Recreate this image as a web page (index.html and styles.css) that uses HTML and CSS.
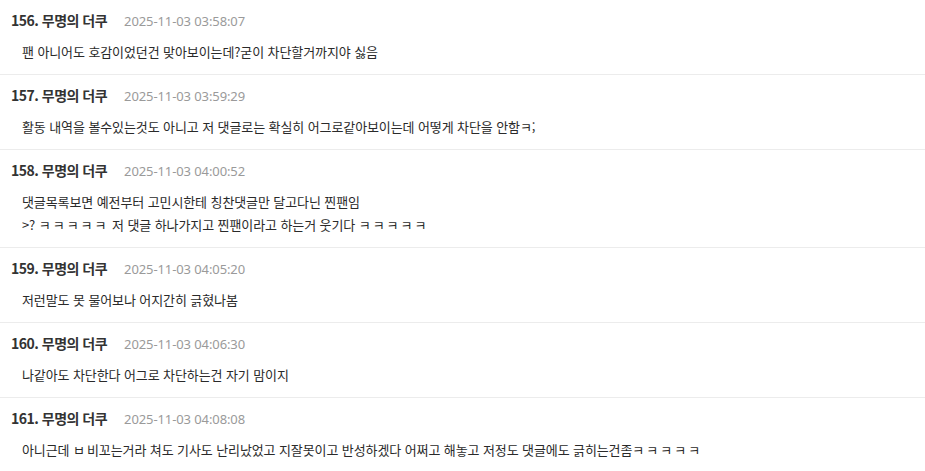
FILE: index.html
```html
<!DOCTYPE html>
<html lang="ko">
<head>
<meta charset="utf-8">
<link rel="stylesheet" href="styles.css">
</head>
<body>
<div class="comments">
  <div class="comment">
    <div class="head"><span class="name">156. 무명의 더쿠</span><span class="date">2025-11-03 03:58:07</span></div>
    <div class="text">팬 아니어도 호감이었던건 맞아보이는데?굳이 차단할거까지야 싫음</div>
  </div>
  <div class="comment">
    <div class="head"><span class="name">157. 무명의 더쿠</span><span class="date">2025-11-03 03:59:29</span></div>
    <div class="text">활동 내역을 볼수있는것도 아니고 저 댓글로는 확실히 어그로같아보이는데 어떻게 차단을 안함ㅋ;</div>
  </div>
  <div class="comment">
    <div class="head"><span class="name">158. 무명의 더쿠</span><span class="date">2025-11-03 04:00:52</span></div>
    <div class="text">댓글목록보면 예전부터 고민시한테 칭찬댓글만 달고다닌 찐팬임<br>&gt;? <span class="kk">ㅋㅋㅋㅋㅋ</span> 저 댓글 하나가지고 찐팬이라고 하는거 웃기다 <span class="kk">ㅋㅋㅋㅋㅋ</span></div>
  </div>
  <div class="comment">
    <div class="head"><span class="name">159. 무명의 더쿠</span><span class="date">2025-11-03 04:05:20</span></div>
    <div class="text">저런말도 못 물어보나 어지간히 긁혔나봄</div>
  </div>
  <div class="comment">
    <div class="head"><span class="name">160. 무명의 더쿠</span><span class="date">2025-11-03 04:06:30</span></div>
    <div class="text">나같아도 차단한다 어그로 차단하는건 자기 맘이지</div>
  </div>
  <div class="comment">
    <div class="head"><span class="name">161. 무명의 더쿠</span><span class="date">2025-11-03 04:08:08</span></div>
    <div class="text">아니근데 <span class="kk">ㅂ</span>비꼬는거라 쳐도 기사도 난리났었고 지잘못이고 반성하겠다 어쩌고 해놓고 저정도 댓글에도 긁히는건좀<span class="kk">ㅋㅋㅋㅋㅋ</span></div>
  </div>
</div>
</body>
</html>
```

FILE: styles.css
```css
html, body {
  margin: 0;
  padding: 0;
  background: #ffffff;
}
body {
  font-family: "Noto Sans CJK KR", "Noto Sans", sans-serif;
  color: #333333;
}
.comments {
  display: flex;
  flex-direction: column;
}
.comment {
  padding: 10px 0 11px 0;
  border-bottom: 1px solid #ececec;
}
.head {
  display: flex;
  align-items: baseline;
  height: 20px;
  line-height: 20px;
  padding-left: 11px;
  gap: 17px;
}
.name {
  font-size: 14px;
  font-weight: 700;
  color: #333333;
  letter-spacing: -0.5px;
}
.date {
  font-size: 13px;
  color: #9a9a9a;
  font-family: "Noto Sans", "Noto Sans CJK KR", sans-serif;
  letter-spacing: -0.1px;
}
.text {
  margin-top: 10px;
  padding-left: 22px;
  font-size: 13px;
  line-height: 23px;
  color: #2a2a2a;
  letter-spacing: -0.1px;
}
.kk {
  letter-spacing: 2px;
}
```
